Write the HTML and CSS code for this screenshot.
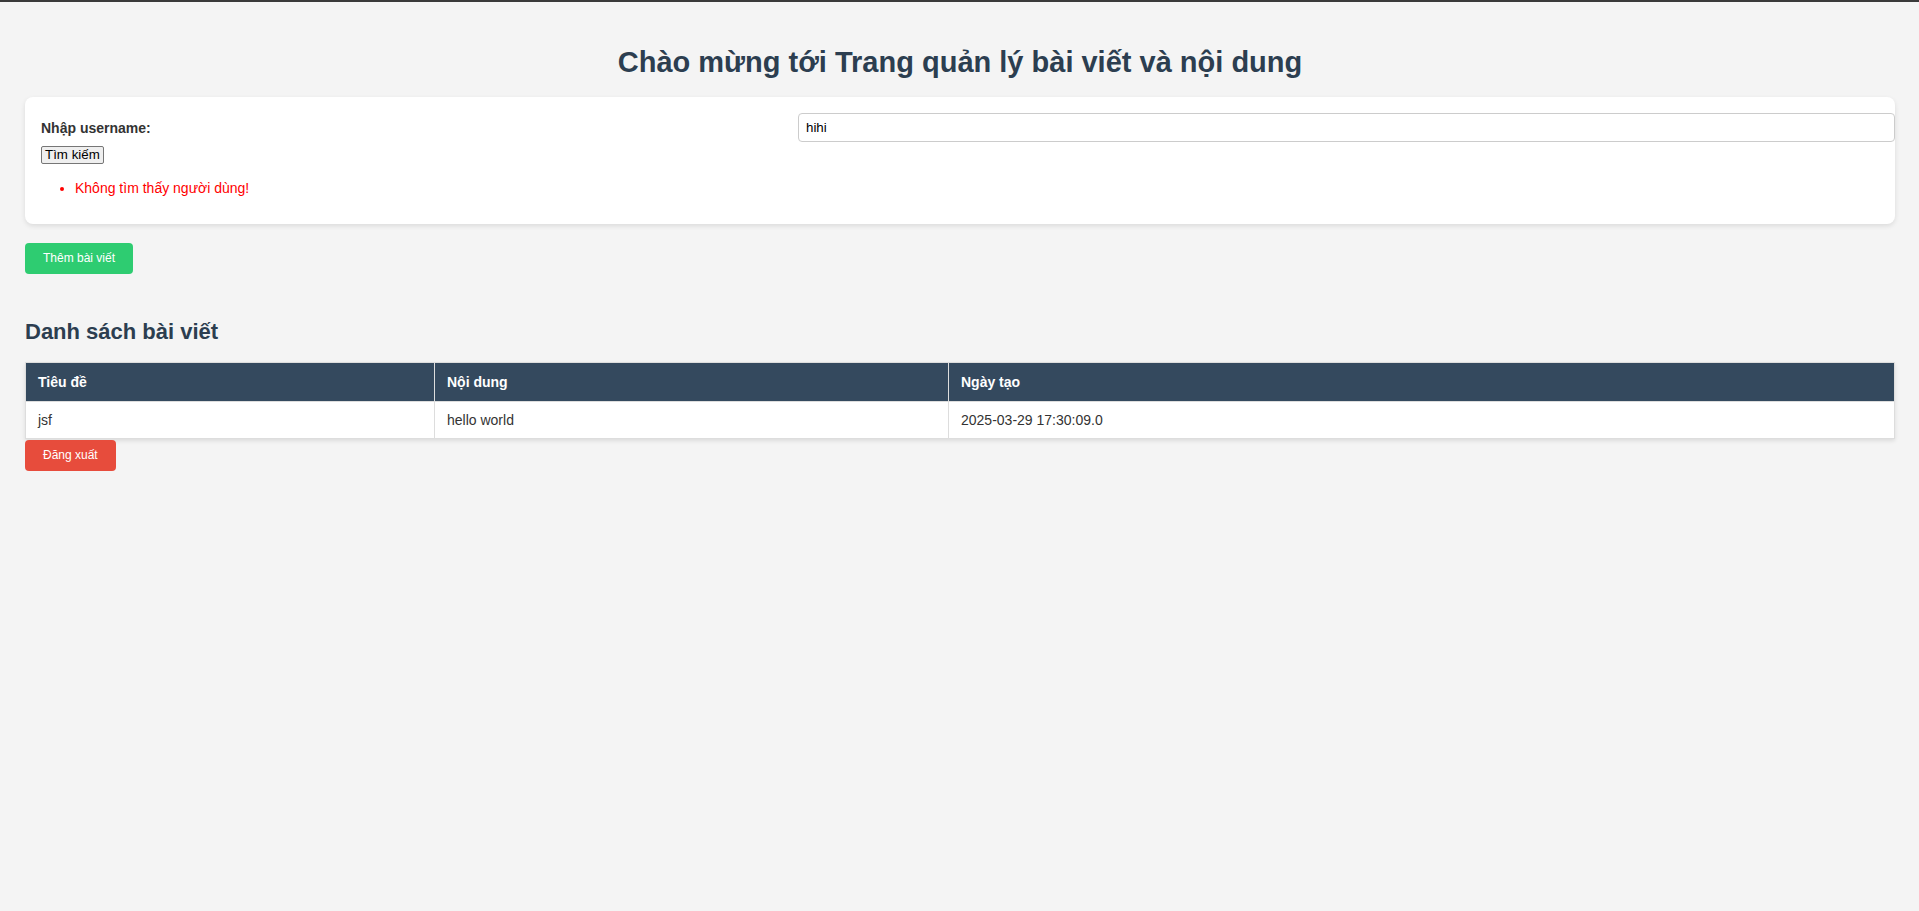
FILE: index.html
```html
<!DOCTYPE html>
<html lang="vi">
<head>
<meta charset="utf-8">
<title>Trang quản lý bài viết</title>
<link rel="stylesheet" href="styles.css">
</head>
<body>
<div class="topbar"></div>
<div class="page">
  <h1 class="title">Chào mừng tới Trang quản lý bài viết và nội dung</h1>
  <form class="card">
    <div class="search-row">
      <label class="label" for="username">Nhập username:</label>
      <input class="input" id="username" type="text" value="hihi">
    </div>
    <button class="btn-search" type="button">Tìm kiếm</button>
    <ul class="messages">
      <li>Không tìm thấy người dùng!</li>
    </ul>
  </form>
  <button class="btn btn-add" type="button">Thêm bài viết</button>
  <h2 class="subtitle">Danh sách bài viết</h2>
  <table class="posts">
    <thead>
      <tr>
        <th class="c1">Tiêu đề</th>
        <th class="c2">Nội dung</th>
        <th class="c3">Ngày tạo</th>
      </tr>
    </thead>
    <tbody>
      <tr>
        <td>jsf</td>
        <td>hello world</td>
        <td>2025-03-29 17:30:09.0</td>
      </tr>
    </tbody>
  </table>
  <button class="btn btn-logout" type="button">Đăng xuất</button>
</div>
</body>
</html>
```

FILE: styles.css
```css
html, body {
  margin: 0;
  padding: 0;
}
body {
  background: #f4f4f4;
  font-family: "Liberation Sans", Arial, sans-serif;
  color: #333;
  min-height: 911px;
}
.topbar {
  height: 2px;
  background: #3a3a3a;
}
.page {
  padding: 0 24px 0 25px;
}
.title {
  margin: 42px 0 17px;
  font-size: 29px;
  line-height: 36px;
  font-weight: bold;
  text-align: center;
  color: #2c3e50;
}
.card {
  background: #fff;
  border-radius: 8px;
  box-shadow: 0 2px 5px rgba(0, 0, 0, 0.1);
  padding: 16px 16px 18px;
  margin: 0;
}
.search-row {
  display: grid;
  grid-template-columns: 757px 1fr;
  align-items: center;
}
.label {
  font-size: 14px;
  font-weight: bold;
  color: #333;
}
.input {
  box-sizing: border-box;
  width: calc(100% + 16px);
  height: 29px;
  padding: 6px 7px;
  border: 1px solid #ccc;
  border-radius: 4px;
  font-family: "Liberation Sans", Arial, sans-serif;
  font-size: 13.33px;
  color: #000;
  background: #fff;
  margin: 0;
}
.btn-search {
  display: block;
  margin-top: 4px;
  height: 18px;
  padding: 0 3px;
  font-family: "Liberation Sans", Arial, sans-serif;
  font-size: 13.33px;
  line-height: 16px;
  color: #000;
  background: #efefef;
  border: 1px solid #767676;
  border-radius: 2px;
}
.messages {
  margin: 16px 0 10px;
  padding-left: 34px;
  color: #f00;
  font-size: 14px;
  line-height: 16px;
}
.btn {
  display: block;
  border: none;
  border-radius: 4px;
  color: #fff;
  font-family: "Liberation Sans", Arial, sans-serif;
  font-size: 12px;
  line-height: 15px;
  padding: 8px 18px;
}
.btn-add {
  margin-top: 19px;
  background: #2ecc71;
}
.subtitle {
  margin: 45px 0 17px;
  font-size: 22px;
  line-height: 26px;
  font-weight: bold;
  color: #2c3e50;
}
.posts {
  width: 100%;
  border-collapse: collapse;
  table-layout: fixed;
  background: #fff;
  box-shadow: 0 2px 4px rgba(0, 0, 0, 0.1);
}
.posts th,
.posts td {
  border: 1px solid #ddd;
  text-align: left;
  font-size: 14px;
  line-height: 16px;
}
.posts th {
  background: #34495e;
  color: #fff;
  font-weight: bold;
  padding: 11px 12px;
}
.posts td {
  padding: 10px 12px;
  color: #333;
}
.c1 { width: 384px; }
.c2 { width: 489px; }
.btn-logout {
  margin-top: 1px;
  background: #e74c3c;
}
```
